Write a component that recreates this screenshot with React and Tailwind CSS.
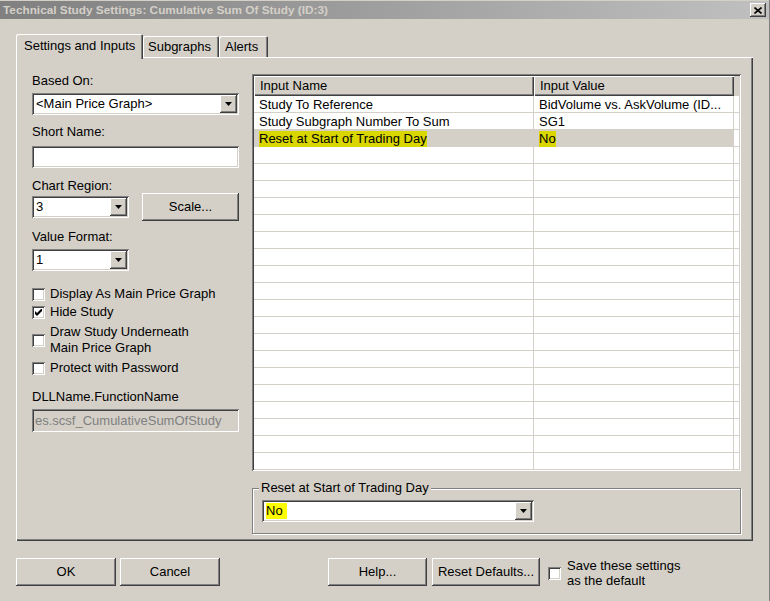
import React from 'react';

const raised = "bg-[#d4d0c8] shadow-[inset_-1px_-1px_#404040,inset_1px_1px_#ffffff,inset_-2px_-2px_#808080,inset_2px_2px_#d4d0c8]";
const sunken = "shadow-[inset_1px_1px_#808080,inset_-1px_-1px_#ffffff,inset_2px_2px_#404040,inset_-2px_-2px_#d4d0c8]";

function Arrow() {
    return (
        <svg width="7" height="4" viewBox="0 0 7 4">
            <path d="M0 0h7L3.5 4z" fill="#000" />
        </svg>
    );
}

function Combo({ value, className = "", mark = "" }) {
    return (
        <div className={`flex h-[22px] items-center bg-white p-[2px] ${sunken} ${className}`}>
            <div className="flex-1 pl-[2px] leading-[16px] whitespace-nowrap overflow-hidden">
                <span className={mark}>{value}</span>
            </div>
            <div className={`w-[17px] h-[18px] flex items-center justify-center ${raised}`}>
                <Arrow />
            </div>
        </div>
    );
}

function Check({ checked }) {
    return (
        <div className={`w-[13px] h-[13px] shrink-0 flex items-center justify-center bg-white ${sunken}`}>
            {checked && (
                <svg width="7" height="7" viewBox="0 0 7 7">
                    <path d="M0 2L2 4L7 -1L7 2L2 7L0 5Z" fill="#000" />
                </svg>
            )}
        </div>
    );
}

function Button({ children, className = "" }) {
    return (
        <div className={`h-[28px] flex items-center justify-center ${raised} ${className}`}>{children}</div>
    );
}

const rows = [
    ["Study To Reference", "BidVolume vs. AskVolume (ID..."],
    ["Study Subgraph Number To Sum", "SG1"],
    ["Reset at Start of Trading Day", "No", true],
    ...Array.from({ length: 19 }, () => ["", ""]),
];

export default function App() {
    return (
        <div className="w-[770px] h-[601px] overflow-hidden bg-[#d4d0c8] pt-[1px] border-r border-[#808080] text-[13px] text-black font-['Liberation_Sans',Arial,sans-serif]">
            {/* title bar */}
            <div className="h-[18px] flex items-center justify-between pl-[3px] pr-[3px] bg-gradient-to-r from-[#808080] to-[#c0c0c0]">
                <span className="text-[11.8px] font-bold text-[#d4d0c8] leading-[14px]">Technical Study Settings: Cumulative Sum Of Study (ID:3)</span>
                <div className={`w-[16px] h-[14px] flex items-center justify-center ${raised}`}>
                    <svg width="8" height="7" viewBox="0 0 8 7">
                        <path d="M0.5 0.5L7.5 6.5M7.5 0.5L0.5 6.5" stroke="#000" strokeWidth="1.6" />
                    </svg>
                </div>
            </div>

            {/* tabs */}
            <div className="flex items-end ml-[16px] mt-[15px]">
                <div className="relative z-10 w-[127px] h-[25px] -mb-[2px] pt-[4px] pl-[8px] leading-[16px] bg-[#d4d0c8] rounded-t-[2px] shadow-[inset_1px_1px_#ffffff,inset_-1px_0_#404040,inset_-2px_0_#808080]">
                    Settings and Inputs
                </div>
                <div className="w-[76px] h-[21px] pt-[3px] pl-[5px] leading-[16px] rounded-t-[2px] shadow-[inset_1px_1px_#ffffff,inset_-1px_0_#404040,inset_-2px_0_#808080]">
                    Subgraphs
                </div>
                <div className="w-[49px] h-[21px] pt-[3px] pl-[6px] leading-[16px] rounded-t-[2px] shadow-[inset_1px_1px_#ffffff,inset_-1px_0_#404040,inset_-2px_0_#808080]">
                    Alerts
                </div>
            </div>

            {/* tab panel */}
            <div className="ml-[16px] w-[737px] h-[484px] flex shadow-[inset_1px_1px_#ffffff,inset_-1px_-1px_#404040,inset_-2px_-2px_#808080]">
                {/* left column */}
                <div className="ml-[16px] w-[207px] pt-[16px] flex flex-col leading-[16px]">
                    <div>Based On:</div>
                    <Combo value={"<Main Price Graph>"} className="mt-[4px]" />
                    <div className="mt-[9px]">Short Name:</div>
                    <div className={`mt-[6px] h-[22px] bg-white ${sunken}`} />
                    <div className="mt-[10px]">Chart Region:</div>
                    <div className="-mt-[1px] flex items-start h-[28px]">
                        <Combo value="3" className="w-[97px] mt-[3px]" />
                        <Button className="ml-auto w-[97px] h-[27px]">Scale...</Button>
                    </div>
                    <div className="mt-[8px]">Value Format:</div>
                    <Combo value="1" className="w-[97px] mt-[4px]" />

                    <div className="mt-[15px] flex items-center gap-[5px]">
                        <Check />
                        <span>Display As Main Price Graph</span>
                    </div>
                    <div className="mt-[2px] flex items-center gap-[5px]">
                        <Check checked />
                        <span>Hide Study</span>
                    </div>
                    <div className="mt-[4px] flex items-center gap-[5px]">
                        <Check />
                        <span>Draw Study Underneath<br />Main Price Graph</span>
                    </div>
                    <div className="mt-[4px] flex items-center gap-[5px]">
                        <Check />
                        <span>Protect with Password</span>
                    </div>

                    <div className="mt-[13px]">DLLName.FunctionName</div>
                    <div className={`mt-[4px] h-[23px] flex items-center pl-[3px] text-[#808080] whitespace-nowrap overflow-hidden ${sunken}`}>
                        es.scsf_CumulativeSumOfStudy
                    </div>
                </div>

                {/* right column */}
                <div className="ml-[13px] w-[489px] pt-[17px] flex flex-col">
                    <div className={`h-[397px] p-[2px] bg-white flex flex-col overflow-hidden ${sunken}`}>
                        <div className="flex h-[20px] shrink-0 bg-[#d4d0c8] leading-[19px]">
                            <div className="w-[280px] pl-[6px] shadow-[inset_1px_1px_#ffffff,inset_-1px_-1px_#404040,inset_-2px_-2px_#808080]">Input Name</div>
                            <div className="w-[200px] pl-[6px] shadow-[inset_1px_1px_#ffffff,inset_-1px_-1px_#404040,inset_-2px_-2px_#808080]">Input Value</div>
                        </div>
                        {rows.map(([name, value, sel], i) => (
                            <div key={i} className="flex h-[17px] shrink-0 leading-[17px] border-b border-[#d4d0c8]">
                                <div className={`w-[280px] pl-[5px] border-r border-[#d4d0c8] whitespace-nowrap ${sel ? 'bg-[#d4d0c8]' : ''}`}>
                                    {sel ? <span className="bg-[#d9d600] pb-[1px]">{name}</span> : name}
                                </div>
                                <div className={`w-[200px] pl-[5px] border-r border-[#d4d0c8] whitespace-nowrap ${sel ? 'bg-[#d4d0c8]' : ''}`}>
                                    {sel ? <span className="bg-[#d9d600] pb-[1px]">{value}</span> : value}
                                </div>
                                <div className="flex-1" />
                            </div>
                        ))}
                    </div>

                    {/* group box */}
                    <div className="relative mt-[17px] h-[46px] border border-[#808080] shadow-[1px_1px_#ffffff,inset_1px_1px_#ffffff] pt-[11px] pl-[9px]">
                        <span className="absolute -top-[9px] left-[6px] px-[2px] leading-[16px] bg-[#d4d0c8]">Reset at Start of Trading Day</span>
                        <Combo value="No" className="w-[272px]" mark="bg-[#ffff00] pr-[4px] py-[2px]" />
                    </div>
                </div>
            </div>

            {/* bottom buttons */}
            <div className="mt-[17px] ml-[16px] flex items-start">
                <Button className="w-[100px]">OK</Button>
                <Button className="w-[100px] ml-[4px]">Cancel</Button>
                <Button className="w-[99px] ml-[108px]">Help...</Button>
                <Button className="w-[108px] ml-[5px]">Reset Defaults...</Button>
                <div className="ml-[8px] flex items-center gap-[6px] leading-[15px]">
                    <Check />
                    <span>Save these settings<br />as the default</span>
                </div>
            </div>
        </div>
    );
}
